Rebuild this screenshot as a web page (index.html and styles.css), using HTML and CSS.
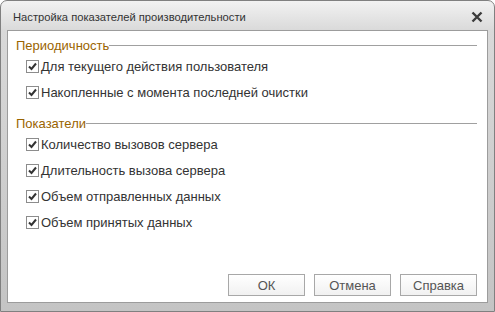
FILE: index.html
```html
<!DOCTYPE html>
<html lang="ru">
<head>
    <meta charset="UTF-8">
    <title>Настройка показателей производительности</title>
    <link rel="stylesheet" href="styles.css">
</head>
<body>
    <div class="window">
        <div class="titlebar">
            <span class="title">Настройка показателей производительности</span>
            <svg class="close" width="12" height="12" viewBox="0 0 12 12">
                <path d="M1.5 1.5 L10.5 10.5 M10.5 1.5 L1.5 10.5" stroke="#3c3c3c" stroke-width="2.4"/>
            </svg>
        </div>
        <div class="content">
            <div class="group">
                <div class="group-title"><span>Периодичность</span></div>
                <label class="check"><span class="box"></span>Для текущего действия пользователя</label>
                <label class="check"><span class="box"></span>Накопленные с момента последней очистки</label>
            </div>
            <div class="group">
                <div class="group-title"><span>Показатели</span></div>
                <label class="check"><span class="box"></span>Количество вызовов сервера</label>
                <label class="check"><span class="box"></span>Длительность вызова сервера</label>
                <label class="check"><span class="box"></span>Объем отправленных данных</label>
                <label class="check"><span class="box"></span>Объем принятых данных</label>
            </div>
            <div class="buttons">
                <button class="btn">ОК</button>
                <button class="btn">Отмена</button>
                <button class="btn">Справка</button>
            </div>
        </div>
    </div>
</body>
</html>
```

FILE: styles.css
```css
html, body {
    margin: 0;
    padding: 0;
    background: #fff;
}
body {
    font-family: "Liberation Sans", Arial, sans-serif;
    font-size: 12px;
    color: #333;
}
.window {
    width: 495px;
    height: 312px;
    box-sizing: border-box;
    border: 1px solid #808080;
    border-radius: 7px 7px 0 0;
    background: linear-gradient(to bottom, #f2f2f2 0px, #d9d9d9 30px, #c4c4c4 100%);
    display: flex;
    flex-direction: column;
}
.titlebar {
    height: 29px;
    display: flex;
    align-items: center;
    justify-content: space-between;
    padding: 0 11px 0 12px;
}
.title {
    color: #333;
    font-size: 11.2px;
    padding-top: 2px;
}
.close {
    margin-top: 2px;
}
.content {
    flex: 1;
    margin: 0 6px 8px 6px;
    background: #fff;
    border: 1px solid #9c9c9c;
    display: flex;
    flex-direction: column;
    padding: 6px 10px 0 8px;
}
.group {
    margin-bottom: 10px;
}
.group-title {
    display: flex;
    align-items: center;
    color: #9a6400;
    font-size: 13px;
    height: 16px;
}
.group-title::after {
    content: "";
    flex: 1;
    height: 1px;
    background: #a0a0a0;
}
.check {
    display: flex;
    align-items: center;
    height: 26px;
    padding-left: 10px;
    font-size: 13px;
    color: #333;
}
.box {
    width: 11px;
    height: 11px;
    border: 1px solid #8c8c8c;
    margin-right: 2px;
    background: #fff url("data:image/svg+xml,%3Csvg xmlns='http://www.w3.org/2000/svg' width='11' height='11'%3E%3Cpath d='M2 5.5 L4.5 8 L9 2.5' fill='none' stroke='%23333' stroke-width='2'/%3E%3C/svg%3E") no-repeat center;
}
.buttons {
    margin-top: auto;
    display: flex;
    justify-content: flex-end;
    gap: 9px;
    padding-bottom: 6px;
}
.btn {
    width: 77px;
    height: 22px;
    background: linear-gradient(to bottom, #fff, #f1f1f1);
    border: 1px solid #a8a8a8;
    font-family: "Liberation Sans", Arial, sans-serif;
    font-size: 13px;
    color: #555;
    padding: 0;
}
```
